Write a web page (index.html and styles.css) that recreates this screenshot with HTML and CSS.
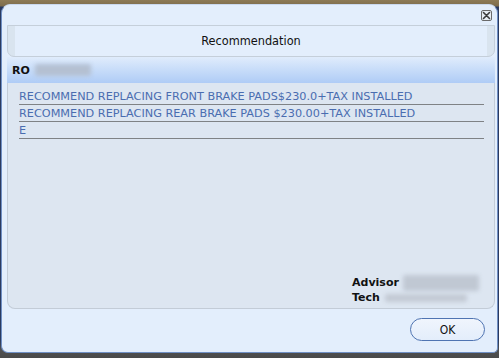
FILE: index.html
```html
<!DOCTYPE html>
<html>
<head>
<meta charset="utf-8">
<link rel="stylesheet" href="styles.css">
</head>
<body>
<div class="dialog">
  <div class="close-row">
    <svg class="close-icon" width="11" height="11" viewBox="0 0 11 11">
      <rect x="0.5" y="0.5" width="10" height="10" rx="1.5" fill="#e8edf3" stroke="#6a6a6a" stroke-width="1"/>
      <path d="M2.5 2.5 L8.5 8.5 M8.5 2.5 L2.5 8.5" stroke="#3c3c3c" stroke-width="1.6" stroke-linecap="round"/>
    </svg>
  </div>
  <div class="panel">
    <div class="panel-head">Recommendation</div>
    <div class="ro-bar"><span class="label">RO</span><span class="blur blur-ro"></span></div>
    <div class="panel-body">
      <ul class="lines">
        <li>RECOMMEND REPLACING FRONT BRAKE PADS$230.0+TAX INSTALLED</li>
        <li>RECOMMEND REPLACING REAR BRAKE PADS $230.00+TAX INSTALLED</li>
        <li>E</li>
      </ul>
      <div class="people">
        <div class="person"><span class="label">Advisor</span><span class="blur blur-adv"></span></div>
        <div class="person"><span class="label">Tech</span><span class="blur blur-tech"></span></div>
      </div>
    </div>
  </div>
  <div class="actions">
    <button class="ok">OK</button>
  </div>
</div>
</body>
</html>
```
FILE: styles.css
```css
html, body {
  margin: 0;
  padding: 0;
}
body {
  width: 499px;
  height: 358px;
  box-sizing: border-box;
  padding: 4px 1px 5px 1px;
  background: linear-gradient(to bottom, #8d7a55 0, #7d6c4c 6px, #2a3a60 7px, #2a3a60 340px, #505050 350px, #4a4a4a 100%);
  overflow: hidden;
}
.dialog {
  height: 349px;
  box-sizing: border-box;
  background: #e3eefc;
  border: 1px solid #6f8fc4;
  border-top-color: #c9d8ee;
  border-radius: 9px 9px 5px 7px;
  display: flex;
  flex-direction: column;
}
.close-row {
  height: 20px;
  display: flex;
  justify-content: flex-end;
  align-items: flex-start;
  padding-right: 5px;
}
.close-icon {
  margin-top: 5px;
}
.panel {
  margin: 0 2px 0 5px;
  display: flex;
  flex-direction: column;
  height: 284px;
}
.panel-head {
  height: 32px;
  box-sizing: border-box;
  border: 1px solid #c5cfda;
  border-radius: 0 0 7px 7px;
  background: linear-gradient(to right, #d9e4ef 0, #d9e4ef 7px, #e3eefc 7px, #e3eefc calc(100% - 7px), #d9e4ef calc(100% - 7px));
  text-align: center;
  font-family: "DejaVu Sans Condensed", "DejaVu Sans", sans-serif;
  font-size: 12.6px;
  line-height: 30px;
  color: #111;
}
.ro-bar {
  height: 26px;
  display: flex;
  align-items: center;
  padding-left: 5px;
  background: linear-gradient(to bottom, #e0ecfc 0, #c7dcf9 50%, #afccf6 100%);
}
.label {
  font-family: "DejaVu Sans", sans-serif;
  font-weight: bold;
  font-size: 11px;
  color: #111;
}
.blur {
  display: inline-block;
  background: #b9c3d0;
  filter: blur(2px);
  border-radius: 2px;
}
.blur-ro {
  width: 56px;
  height: 12px;
  margin-left: 5px;
  background: #b4c0d2;
}
.panel-body {
  flex: 1;
  background: #dde6f1;
  border: 1px solid #c3ccd7;
  border-top: none;
  border-radius: 0 0 8px 8px;
  display: flex;
  flex-direction: column;
}
.lines {
  list-style: none;
  margin: 5px 10px 0 11px;
  padding: 0;
}
.lines li {
  height: 17px;
  padding-top: 2px;
  box-sizing: border-box;
  line-height: 14px;
  border-bottom: 1px solid #7f8285;
  font-family: "DejaVu Sans", sans-serif;
  font-size: 11.25px;
  color: #4a6db0;
  white-space: nowrap;
}
.people {
  margin-top: auto;
  margin-left: 344px;
  margin-bottom: 3px;
  display: flex;
  flex-direction: column;
}
.person {
  display: flex;
  align-items: center;
  height: 15px;
}
.blur-adv {
  width: 76px;
  height: 16px;
  margin-left: 4px;
  background: #c0c8d3;
}
.blur-tech {
  width: 82px;
  height: 8px;
  margin-left: 5px;
  background: #c3cad4;
}
.actions {
  flex: 1;
  display: flex;
  justify-content: flex-end;
  align-items: flex-start;
  padding: 9px 12px 0 0;
}
.ok {
  width: 75px;
  height: 23px;
  border: 1.5px solid #4f74b2;
  border-radius: 12px;
  background: linear-gradient(to bottom, #f0f5fd, #e3edfb);
  font-family: "DejaVu Sans Condensed", "DejaVu Sans", sans-serif;
  font-size: 12px;
  color: #111;
  padding: 0;
}
```
